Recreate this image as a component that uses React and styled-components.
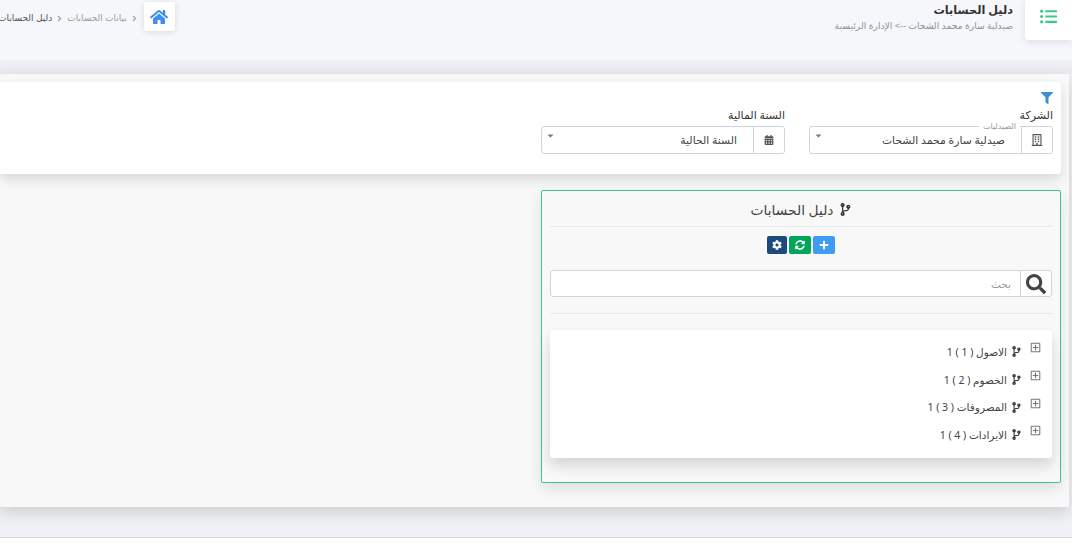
import React from 'react'
import styled, { createGlobalStyle } from 'styled-components'
import { FaAngleRight, FaFilter, FaHome, FaRegBuilding, FaCalendarAlt, FaCaretDown, FaCog, FaSyncAlt, FaPlus, FaSearch, FaCodeBranch, FaRegPlusSquare, FaListUl } from 'react-icons/fa'

const Global = createGlobalStyle`
  html, body { margin: 0; padding: 0; background: #fff; }
  body { font-family: 'Noto Sans', 'DejaVu Sans', sans-serif; overflow: hidden; }
  * { box-sizing: border-box; }
`

const accounts = ['الاصول ( 1 ) 1', 'الخصوم ( 2 ) 1', 'المصروفات ( 3 ) 1', 'الايرادات ( 4 ) 1']

export default function App() {
  return (
    <Page dir="rtl">
      <Global />
      <Header>
        <MenuTile><FaListUl /></MenuTile>
        <TitleBlock>
          <h1>دليل الحسابات</h1>
          <p>صيدلية سارة محمد الشحات --&gt; الإدارة الرئيسية</p>
        </TitleBlock>
        <Crumbs>
          <HomeTile><FaHome /></HomeTile>
          <Chevron><FaAngleRight /></Chevron>
          <Crumb>بيانات الحسابات</Crumb>
          <Chevron><FaAngleRight /></Chevron>
          <Crumb $current>دليل الحسابات</Crumb>
        </Crumbs>
      </Header>
      <Band />
      <Main>
        <FilterCard>
          <FilterIcon><FaFilter /></FilterIcon>
          <FilterRow>
            <Field>
              <FieldLabel>الشركة</FieldLabel>
              <SelectGroup>
                <Addon $size={12}><FaRegBuilding /></Addon>
                <Select>
                  <Legend>الصيدليات</Legend>
                  <span>صيدلية سارة محمد الشحات</span>
                  <Caret><FaCaretDown /></Caret>
                </Select>
              </SelectGroup>
            </Field>
            <Field>
              <FieldLabel>السنة المالية</FieldLabel>
              <SelectGroup>
                <Addon $size={10}><FaCalendarAlt /></Addon>
                <Select>
                  <span>السنة الحالية</span>
                  <Caret><FaCaretDown /></Caret>
                </Select>
              </SelectGroup>
            </Field>
          </FilterRow>
        </FilterCard>
        <TreePanel>
          <PanelTitle><FaCodeBranch /><span>دليل الحسابات</span></PanelTitle>
          <Actions>
            <ActionButton $bg="#3f9cf5" $width={22}><FaPlus /></ActionButton>
            <ActionButton $bg="#00a65a" $width={22}><FaSyncAlt /></ActionButton>
            <ActionButton $bg="#1b4a7c" $width={20}><FaCog /></ActionButton>
          </Actions>
          <SearchGroup>
            <SearchIcon><FaSearch /></SearchIcon>
            <SearchInput placeholder="بحث" />
          </SearchGroup>
          <Divider />
          <TreeCard>
            {accounts.map(name => (
              <TreeRow key={name}>
                <Expander><FaRegPlusSquare /></Expander>
                <BranchIcon><FaCodeBranch /></BranchIcon>
                <span>{name}</span>
              </TreeRow>
            ))}
          </TreeCard>
        </TreePanel>
      </Main>
    </Page>
  )
}

const Page = styled.div`
  width: 1072px;
  height: 538px;
  overflow: hidden;
  background: #eff1f5;
  border-bottom: 1px solid #d5d8dc;
  color: #333;
`

const Header = styled.header`
  height: 60px;
  background: #f5f7fa;
  display: flex;
  align-items: flex-start;
`

const MenuTile = styled.div`
  width: 47px;
  height: 40px;
  padding-bottom: 8px;
  background: #fff;
  border-bottom-left-radius: 4px;
  box-shadow: 0 2px 8px rgba(0, 0, 0, 0.1);
  display: flex;
  align-items: center;
  justify-content: center;
  color: #3cc88a;
  font-size: 17px;
`

const TitleBlock = styled.div`
  margin-right: 12px;
  padding-top: 1px;

  h1 {
    margin: 0;
    font-size: 11.3px;
    line-height: 18px;
    font-weight: 700;
    color: #333;
  }

  p {
    margin: 0;
    font-size: 9.2px;
    line-height: 13px;
    color: #8f8f9b;
  }
`

const Crumbs = styled.div`
  margin-right: auto;
  margin-left: -2px;
  padding-top: 2px;
  display: flex;
  align-items: flex-start;
  gap: 3px;
`

const HomeTile = styled.div`
  width: 31px;
  height: 29px;
  background: #fff;
  border-radius: 2px;
  box-shadow: 0 1px 6px rgba(0, 0, 0, 0.12);
  display: flex;
  align-items: center;
  justify-content: center;
  color: #3f8ef0;
  font-size: 18px;
  margin-left: 2px;
`

const Crumb = styled.span`
  font-size: 9px;
  line-height: 32px;
  white-space: nowrap;
  color: ${p => (p.$current ? '#555' : '#9a9aa5')};
`

const Chevron = styled.span`
  height: 32px;
  display: flex;
  align-items: center;
  font-size: 9px;
  color: #a5a5ad;
`

const Band = styled.div`
  height: 14px;
  background: linear-gradient(#eef0f3, #e8eaee);
`

const Main = styled.main`
  margin-right: 3px;
  height: 433px;
  padding: 8px 8px 0 0;
  background: #f8f8f8;
  box-shadow: 0 6px 14px rgba(0, 0, 0, 0.14);
`

const FilterCard = styled.section`
  height: 92px;
  padding: 10px 8px 0;
  background: #fff;
  border-radius: 0 3px 3px 0;
  box-shadow: 0 6px 12px rgba(0, 0, 0, 0.12);
`

const FilterIcon = styled.div`
  height: 15px;
  color: #3d8fd1;
  font-size: 12px;
  line-height: 14px;
`

const FilterRow = styled.div`
  display: flex;
  gap: 24px;
`

const Field = styled.div`
  width: 244px;
`

const FieldLabel = styled.div`
  font-size: 11px;
  line-height: 15px;
  color: #333;
  margin-bottom: 4px;
`

const SelectGroup = styled.div`
  display: flex;
  height: 28px;
  border: 1px solid #ced4e0;
  border-radius: 3px;
`

const Addon = styled.div`
  width: 31px;
  flex: none;
  border-left: 1px solid #ced4e0;
  display: flex;
  align-items: center;
  justify-content: center;
  color: #555;
  font-size: ${p => p.$size}px;
`

const Select = styled.div`
  flex: 1;
  position: relative;
  padding-right: 16px;
  font-size: 10.8px;
  line-height: 26px;
  color: #444;
`

const Legend = styled.span`
  position: absolute;
  top: -7px;
  right: 1px;
  padding: 0 4px;
  background: #fff;
  font-size: 8px;
  line-height: 11px;
  color: #999;
`

const Caret = styled.span`
  position: absolute;
  left: 4px;
  top: 4px;
  line-height: 10px;
  font-size: 9px;
  color: #777;
`

const TreePanel = styled.div`
  margin-top: 16px;
  width: 520px;
  height: 293px;
  padding: 8px;
  border: 1px solid #3fc28a;
  border-radius: 2px;
  box-shadow: 0 6px 14px rgba(0, 0, 0, 0.1);
`

const PanelTitle = styled.div`
  height: 28px;
  padding-bottom: 6px;
  border-bottom: 1px solid #e9e9e9;
  display: flex;
  align-items: center;
  justify-content: center;
  gap: 5px;
  font-size: 13.8px;
  color: #444;

  svg {
    font-size: 13px;
    color: #333;
  }
`

const Actions = styled.div`
  height: 43px;
  padding-top: 9px;
  display: flex;
  justify-content: center;
  align-items: flex-start;
  gap: 2px;
`

const ActionButton = styled.div`
  width: ${p => p.$width}px;
  height: 18px;
  border-radius: 2px;
  background: ${p => p.$bg};
  color: #fff;
  font-size: 10px;
  display: flex;
  align-items: center;
  justify-content: center;
`

const SearchGroup = styled.div`
  display: flex;
  height: 27px;
  background: #fff;
  border: 1px solid #ced4e0;
  border-radius: 3px;
`

const SearchIcon = styled.div`
  width: 31px;
  flex: none;
  border-left: 1px solid #ced4e0;
  display: flex;
  align-items: center;
  justify-content: center;
  color: #444;
  font-size: 20px;
`

const SearchInput = styled.input`
  flex: 1;
  border: 0;
  outline: 0;
  background: transparent;
  padding: 0 9px;
  font-family: inherit;
  font-size: 10.5px;

  &::placeholder {
    color: #999;
  }
`

const Divider = styled.div`
  margin-top: 16px;
  height: 1px;
  background: #e9e9e9;
`

const TreeCard = styled.div`
  margin-top: 16px;
  height: 128px;
  padding: 8px 11px 0 0;
  background: #fff;
  border-radius: 3px;
  box-shadow: 0 8px 14px rgba(0, 0, 0, 0.14);
`

const TreeRow = styled.div`
  height: 27.7px;
  display: flex;
  align-items: center;
  font-size: 10.5px;
  color: #444;
`

const Expander = styled.span`
  display: flex;
  margin-top: -8px;
  margin-left: 8px;
  font-size: 11px;
  color: #777;
`

const BranchIcon = styled.span`
  display: flex;
  margin-left: 4px;
  font-size: 11px;
  color: #333;
`
